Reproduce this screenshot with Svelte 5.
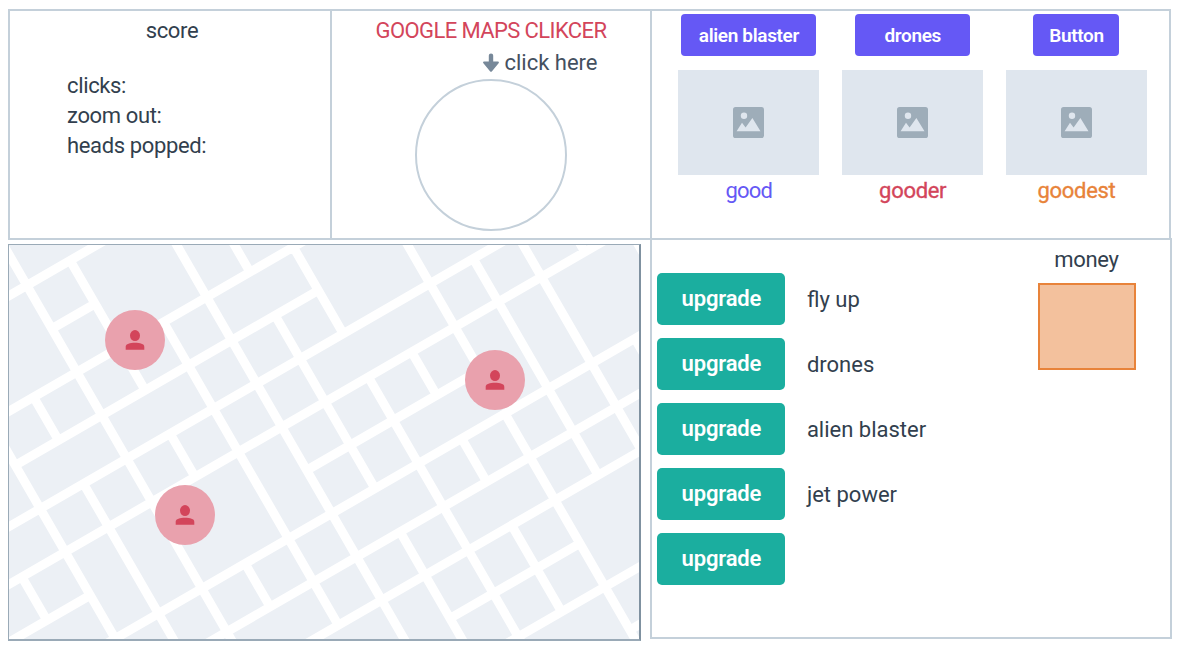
<script>
  const stats = ['clicks:', 'zoom out:', 'heads popped:'];
  const rewards = [
    { button: 'alien blaster', width: 135, label: 'good', color: '#6558f5' },
    { button: 'drones', width: 115, label: 'gooder', color: '#d3455b' },
    { button: 'Button', width: 86, label: 'goodest', color: '#e8833a' }
  ];
  const upgrades = ['fly up', 'drones', 'alien blaster', 'jet power', ''];
  const pins = [
    { x: 135, y: 340 },
    { x: 495, y: 380 },
    { x: 185, y: 515 }
  ];

  // Streets on a rotated 50-unit grid: [line, from, to]
  const streets = [
    [0, -3, 4], [1, 0, 1], [2, -3, 7], [3, -2, 5], [4, -4, 10], [5, -5, 12],
    [6, -5, -2], [6, 3, 7], [7, -4, 12], [8, -2, 12], [9, 0, 12],
    [10, 4, 7], [11, 4, 10], [12, 7, 9]
  ];
  const avenues = [
    [-3, 5, 6], [-2, 1, 8], [-1, 2, 3], [-1, 4, 8], [0, -2, 9], [1, 0, 3],
    [1, 4, 5], [1, 7, 8], [2, 2, 9], [3, 0, 11], [4, 0, 2], [4, 3, 7],
    [4, 8, 11], [5, 2, 4], [5, 5, 12], [6, 5, 6], [6, 7, 8], [6, 9, 11],
    [7, 2, 6], [7, 7, 13], [8, 4, 9], [9, 3, 9], [10, 4, 5], [10, 7, 8], [11, 4, 6]
  ];
  const u = (m) => -119.5 + 50 * m;
  const v = (k) => 260.6 + 50 * k;
  const roads =
    streets.map(([k, a, b]) => `M${u(a)} ${v(k)}H${u(b)}`).join('') +
    avenues.map(([m, a, b]) => `M${u(m)} ${v(a)}V${v(b)}`).join('');
</script>

<main>
  <div class="top">
    <section class="panel score">
      <h2>score</h2>
      <ul>
        {#each stats as s}<li>{s}</li>{/each}
      </ul>
    </section>

    <section class="panel clicker">
      <h1>GOOGLE MAPS CLIKCER</h1>
      <div class="hint">
        <svg width="18" height="20" viewBox="0 0 18 20">
          <path d="M6.8 2.5Q6.8.6 9 .6T11.2 2.5V8.4H16Q17.7 8.7 16.6 10.2L10 18.3Q9 19.3 8 18.3L1.4 10.2Q.3 8.7 2 8.4H6.8Z" fill="#778899" />
        </svg>
        <span>click here</span>
      </div>
      <button class="target" aria-label="click here"></button>
    </section>

    <section class="panel rewards">
      {#each rewards as r, i}
        <div class="reward">
          <button class="buy" style="width:{r.width}px">{r.button}</button>
          <div class="thumb">
            <svg width="31" height="31" viewBox="0 0 31 31">
              <rect width="31" height="31" rx="2.6" fill="#9eadb9" />
              <circle cx="11" cy="8.7" r="3.2" fill="#dfe6ee" />
              <path d="M3.6 24.3L9 15.7L12.6 20.5L19.4 11L27.5 24.3Z" fill="#dfe6ee" />
            </svg>
          </div>
          <span class="label l{i}" style="color:{r.color}">{r.label}</span>
        </div>
      {/each}
    </section>
  </div>

  <div class="bottom">
    <div class="map">
      <svg viewBox="9 245 630 394" width="630" height="394">
        <g transform="rotate(-30)">
          <path d={roads} fill="none" stroke="#fff" stroke-width="9" />
        </g>
        {#each pins as p}
          <g transform="translate({p.x} {p.y})">
            <circle r="30" fill="#e9a1ad" />
            <ellipse cx="0" cy="-4.4" rx="5" ry="5.5" fill="#d3455b" />
            <path d="M-9.3 9.7V6.8C-9.3 3.8-5 2.8 0 2.8S9.3 3.8 9.3 6.8V9.7Z" fill="#d3455b" />
          </g>
        {/each}
      </svg>
    </div>

    <section class="panel shop">
      <div class="upgrades">
        {#each upgrades as name}
          <div class="row">
            <button class="upgrade">upgrade</button>
            <span>{name}</span>
          </div>
        {/each}
      </div>
      <div class="money">
        <span>money</span>
        <div class="box"></div>
      </div>
    </section>
  </div>
</main>

<style>
  :global(body) {
    margin: 0;
    background: #fff;
  }
  main {
    box-sizing: border-box;
    width: 1180px;
    height: 650px;
    padding: 9px 0 0 8px;
    overflow: hidden;
    font: 22px/30px Roboto, 'Liberation Sans', sans-serif;
    color: #323f4e;
  }
  main * {
    box-sizing: border-box;
  }
  h1, h2, ul {
    margin: 0;
    padding: 0;
    font-size: inherit;
    font-weight: 400;
    list-style: none;
  }
  span, h1, button {
    white-space: nowrap;
  }
  button {
    border: 0;
    padding: 0;
    font-family: inherit;
    color: #fff;
  }
  .panel {
    border: 2px solid #c4d0da;
  }
  .top {
    display: flex;
    height: 231px;
  }
  .score {
    width: 324px;
    padding-top: 5px;
    letter-spacing: -0.36px;
  }
  .score h2 {
    text-align: center;
    padding-left: 4px;
  }
  .score ul {
    padding: 25px 0 0 57px;
  }
  .clicker {
    width: 322px;
    margin-left: -2px;
    padding-top: 5px;
    display: flex;
    flex-direction: column;
    align-items: center;
  }
  .clicker h1 {
    color: #d3455b;
    line-height: 30px;
    letter-spacing: -0.6px;
  }
  .hint {
    display: flex;
    align-items: center;
    gap: 4px;
    height: 32px;
    padding-top: 1px;
    margin-left: 98px;
    color: #44505f;
  }
  .target {
    flex: none;
    width: 152px;
    height: 152px;
    margin-top: 1px;
    border: 2.5px solid #c4d0da;
    border-radius: 50%;
    background: #fff;
  }
  .rewards {
    width: 521px;
    margin-left: -2px;
    padding: 3px 0 0 26.4px;
    display: flex;
    gap: 22.8px;
  }
  .reward {
    width: 141px;
    display: flex;
    flex-direction: column;
    align-items: center;
  }
  .buy {
    height: 42px;
    border-radius: 4px;
    background: #6558f5;
    font-size: 19px;
    font-weight: 600;
    letter-spacing: -0.35px;
  }
  .thumb {
    width: 141px;
    height: 105px;
    margin-top: 14px;
    display: flex;
    align-items: center;
    justify-content: center;
    background: #dfe6ee;
  }
  .label {
    margin-top: 1px;
    letter-spacing: -0.3px;
    -webkit-text-stroke: 0.35px currentColor;
  }
  .l0 {
    letter-spacing: -0.8px;
    -webkit-text-stroke: 0;
  }
  .bottom {
    display: flex;
    height: 401px;
  }
  .map {
    width: 633px;
    height: 397px;
    margin-top: 4px;
    border: 1px solid #9aaab7;
    border-width: 1px 2px 2px 1px;
    border-right-color: #7f91a0;
    background: #ecf0f5;
  }
  .map svg {
    display: block;
  }
  .shop {
    width: 521.5px;
    height: 401px;
    margin: -2px 0 0 9px;
    padding: 0 34px 0 5.4px;
    display: flex;
    justify-content: space-between;
  }
  .upgrades {
    padding-top: 32.6px;
    display: flex;
    flex-direction: column;
    gap: 13px;
  }
  .row {
    display: flex;
    align-items: center;
    gap: 21.5px;
    height: 52px;
  }
  .row span {
    padding-top: 2px;
  }
  .upgrade {
    width: 128px;
    height: 52px;
    border-radius: 5px;
    background: #1bae9f;
    font-size: 22px;
    font-weight: 600;
    letter-spacing: -0.15px;
  }
  .money {
    width: 98px;
    padding-top: 5px;
    display: flex;
    flex-direction: column;
    align-items: center;
    letter-spacing: -0.3px;
  }
  .box {
    width: 98px;
    height: 87px;
    margin-top: 8px;
    border: 2px solid #e8833a;
    background: #f3c19d;
  }
</style>
